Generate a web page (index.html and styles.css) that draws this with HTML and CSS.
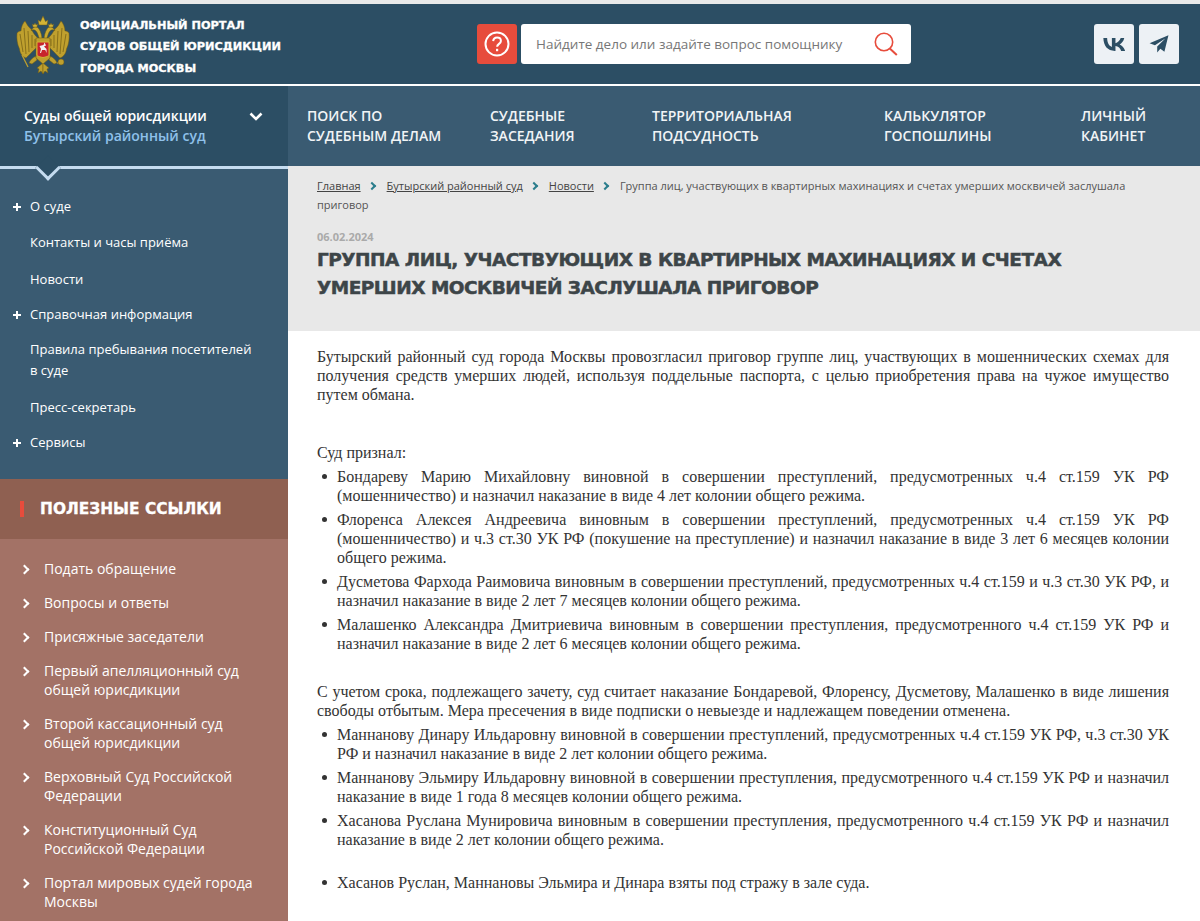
FILE: index.html
```html
<!DOCTYPE html>
<html lang="ru">
<head>
<meta charset="utf-8">
<title>Группа лиц</title>
<link rel="stylesheet" href="styles.css">
</head>
<body>
<header class="top">
  <a class="brand">
    <svg class="emblem" viewBox="0 0 54 58" width="54" height="58">
      <defs>
        <g id="half">
          <path fill="#bfa02e" stroke="#6e5a12" stroke-width=".5" d="M22 30C15 37 12 40 10 42 7 41 4 38 3.500 33 1 28 .5 22 1 17c2-2 3-2 4-2 0-4 2-8 4-10 2 3 3 6 6 8 2 3 4 7 7 9z"/>
          <path fill="none" stroke="#6e5a12" stroke-width=".7" d="M4 18l3 18M8 12l2 26M12 15l1 21M16 19v13M19 23v7"/>
          <path fill="#c9a92f" stroke="#6e5a12" stroke-width=".5" d="M24 24c-2-4-2-7-4-9-2-2-4-1-5 0l2-3c2-2 5-1 6 1 2 3 3 7 3 11z"/>
          <path fill="#d3b335" stroke="#6e5a12" stroke-width=".4" d="M17 11l-.5-3 1.500 1 1-2 1 2 1.500-1-.5 3z"/>
          <path fill="#bfa02e" stroke="#6e5a12" stroke-width=".5" d="M20 40c-4 2-6 4-7 7l3 1 5-4zM27 47l-6 5 2 1-1 4 3-2 2 3z"/>
        </g>
      </defs>
      <use href="#half"/>
      <use href="#half" transform="matrix(-1 0 0 1 54 0)"/>
      <path fill="none" stroke="#bfa02e" stroke-width="1.200" d="M6 39l6 12"/>
      <path fill="none" stroke="#bfa02e" stroke-width="1" d="M41 47l3 0"/>
      <circle cx="45" cy="46" r="3" fill="#bfa02e" stroke="#6e5a12" stroke-width=".5"/>
      <path fill="#d3b335" stroke="#6e5a12" stroke-width=".5" d="M23 9l-1-5 2.500 1.500L27 0l2.500 5.500L32 4l-1 5z"/>
      <path fill="#bfa02e" stroke="#6e5a12" stroke-width=".5" d="M20 22h14v20l-7 6-7-6z"/>
      <path fill="#c8232c" stroke="#d3b335" stroke-width="1" d="M21 26h12v13c0 1-3 2-6 2.500-3-.5-6-1.500-6-2.500z"/>
      <path fill="#f2f2f2" d="M24 37l1-4-1.500-3 4-1 1-2.500 1.500 3-2 1 2.500 2.500V37l-1.200-3h-3.300L25 37z"/>
    </svg>
    <span class="brand-text">Официальный портал<br>судов общей юрисдикции<br>города Москвы</span>
  </a>
  <div class="search">
    <span class="help">
      <svg viewBox="0 0 28 28" width="28" height="28"><circle cx="14" cy="14" r="11.500" fill="none" stroke="#fff" stroke-width="2"/><path d="M10.200 11.200c.2-2.300 1.900-3.600 3.900-3.600 2.200 0 3.800 1.400 3.800 3.300 0 2.900-3.800 3-3.800 5.900" fill="none" stroke="#fff" stroke-width="2"/><rect x="13" y="18.800" width="2.200" height="2.400" fill="#fff"/></svg>
    </span>
    <div class="search-box">
      <span class="placeholder">Найдите дело или задайте вопрос помощнику</span>
      <svg class="loupe" viewBox="0 0 24 24" width="24" height="24"><circle cx="10" cy="10" r="8.700" fill="none" stroke="#e74c3c" stroke-width="1.600"/><path d="M15.800 16.500l7 6.500" stroke="#e74c3c" stroke-width="2" fill="none"/></svg>
    </div>
  </div>
  <div class="socials">
    <a class="social"><svg viewBox="0 0 24 14" width="22" height="13"><path fill="#2c4e64" d="M13 14C5 14 .6 8.700.4 0h4.100c.1 6.400 3 9.100 5.200 9.700V0h3.900v5.500c2.400-.3 4.900-2.800 5.700-5.500h3.900c-.6 3.400-3.200 5.900-5 6.900 1.800.8 4.800 3.100 5.900 7.100h-4.300c-.9-2.900-3.200-5.100-6.200-5.400V14z"/></svg></a>
    <a class="social"><svg viewBox="0 0 22 20" width="20" height="18"><path fill="#2c4e64" d="M21.500.3L.5 9.300l6 2.200L18 3.800 9 12.800v6.700l3.500-4.200 4.500 3.400z"/></svg></a>
  </div>
</header>
<nav class="bar">
  <div class="court">
    <div class="court-text">
      <div class="court-name">Суды общей юрисдикции</div>
      <div class="court-sub">Бутырский районный суд</div>
    </div>
    <svg class="court-arrow" viewBox="0 0 14 9" width="14" height="9"><path d="M1.500 1.500L7 7l5.500-5.500" fill="none" stroke="#fff" stroke-width="2.600"/></svg>
    <span class="notch"></span>
  </div>
  <div class="main-nav">
    <a>Поиск по<br>судебным делам</a>
    <a>Судебные<br>заседания</a>
    <a>Территориальная<br>подсудность</a>
    <a>Калькулятор<br>госпошлины</a>
    <a>Личный<br>кабинет</a>
  </div>
</nav>
<div class="layout">
  <aside class="side">
    <ul class="side-menu">
      <li class="plus">О суде</li>
      <li>Контакты и часы приёма</li>
      <li>Новости</li>
      <li class="plus">Справочная информация</li>
      <li>Правила пребывания посетителей в суде</li>
      <li>Пресс-секретарь</li>
      <li class="plus">Сервисы</li>
    </ul>
    <h2 class="links-title"><span>Полезные ссылки</span></h2>
    <ul class="links">
      <li>Подать обращение</li>
      <li>Вопросы и ответы</li>
      <li>Присяжные заседатели</li>
      <li>Первый апелляционный суд общей юрисдикции</li>
      <li>Второй кассационный суд общей юрисдикции</li>
      <li>Верховный Суд Российской Федерации</li>
      <li>Конституционный Суд Российской Федерации</li>
      <li>Портал мировых судей города Москвы</li>
    </ul>
  </aside>
  <main class="content">
    <section class="head">
      <div class="crumbs"><a>Главная</a><i></i><a>Бутырский районный суд</a><i></i><a>Новости</a><i></i><span>Группа лиц, участвующих в квартирных махинациях и счетах умерших москвичей заслушала</span> <span>приговор</span></div>
      <div class="date">06.02.2024</div>
      <h1>Группа лиц, участвующих в квартирных махинациях и счетах умерших москвичей заслушала приговор</h1>
    </section>
    <article class="text">
      <p class="lead">Бутырский районный суд города Москвы провозгласил приговор группе лиц, участвующих в мошеннических схемах для получения средств умерших людей, используя поддельные паспорта, с целью приобретения права на чужое имущество путем обмана.</p>
      <p>Суд признал:</p>
      <ul>
        <li>Бондареву Марию Михайловну виновной в совершении преступлений, предусмотренных ч.4 ст.159 УК РФ (мошенничество) и назначил наказание в виде 4 лет колонии общего режима.</li>
        <li>Флоренса Алексея Андреевича виновным в совершении преступлений, предусмотренных ч.4 ст.159 УК РФ (мошенничество) и ч.3 ст.30 УК РФ (покушение на преступление) и назначил наказание в виде 3 лет 6 месяцев колонии общего режима.</li>
        <li>Дусметова Фархода Раимовича виновным в совершении преступлений, предусмотренных ч.4 ст.159 и ч.3 ст.30 УК РФ, и назначил наказание в виде 2 лет 7 месяцев колонии общего режима.</li>
        <li>Малашенко Александра Дмитриевича виновным в совершении преступления, предусмотренного ч.4 ст.159 УК РФ и назначил наказание в виде 2 лет 6 месяцев колонии общего режима.</li>
      </ul>
      <p class="second">С учетом срока, подлежащего зачету, суд считает наказание Бондаревой, Флоренсу, Дусметову, Малашенко в виде лишения свободы отбытым. Мера пресечения в виде подписки о невыезде и надлежащем поведении отменена.</p>
      <ul>
        <li>Маннанову Динару Ильдаровну виновной в совершении преступлений, предусмотренных ч.4 ст.159 УК РФ, ч.3 ст.30 УК РФ и назначил наказание в виде 2 лет колонии общего режима.</li>
        <li>Маннанову Эльмиру Ильдаровну виновной в совершении преступления, предусмотренного ч.4 ст.159 УК РФ и назначил наказание в виде 1 года 8 месяцев колонии общего режима.</li>
        <li>Хасанова Руслана Мунировича виновным в совершении преступления, предусмотренного ч.4 ст.159 УК РФ и назначил наказание в виде 2 лет колонии общего режима.</li>
      </ul>
      <ul class="last">
        <li>Хасанов Руслан, Маннановы Эльмира и Динара взяты под стражу в зале суда.</li>
      </ul>
    </article>
  </main>
</div>
</body>
</html>
```
FILE: styles.css
```css
* { box-sizing: border-box; }
html, body { margin: 0; padding: 0; height: 921px; overflow: hidden; }
body { background: #fff; font-family: "Open Sans", sans-serif; border-top: 4px solid #e9e9e9; }
ul { list-style: none; margin: 0; padding: 0; }

.top { height: 80px; background: #2c4e64; display: flex; align-items: center; position: relative; }
.brand { width: 477px; padding-left: 16px; display: flex; align-items: center; flex: none; }
.emblem { flex: none; margin-top: 2px; }
.brand-text { margin: 6px 0 0 10px; color: #fff; font: 700 11.300px/21.500px "DejaVu Sans", sans-serif; text-transform: uppercase; -webkit-text-stroke: .3px #fff; }
.search { display: flex; gap: 4px; }
.help { width: 40px; height: 40px; background: #e74c3c; border-radius: 3px; display: flex; align-items: center; justify-content: center; }
.search-box { width: 390px; height: 40px; background: #fff; border-radius: 3px; display: flex; align-items: center; justify-content: space-between; padding: 0 13px 0 15px; }
.placeholder { font-size: 13.500px; color: #777; }
.socials { margin-left: 183px; display: flex; gap: 5px; }
.social { width: 40px; height: 40px; background: #edf1f5; border-radius: 3px; display: flex; align-items: center; justify-content: center; }

.bar { margin-top: 2px; height: 80px; display: flex; }
.court { width: 288px; flex: none; background: #2c4e64; padding: 20px 25px 0 24px; display: flex; justify-content: space-between; align-items: flex-start; position: relative; color: #fff; }
.court-name { font-size: 14px; font-weight: 600; line-height: 20px; }
.court-sub { font-size: 14px; font-weight: 600; line-height: 20px; color: #8fc1ea; }
.court-arrow { margin-top: 6px; }
.notch { position: absolute; left: 39px; top: 73px; width: 18px; height: 18px; background: #2c4e64; border-right: 3px solid #c5dcf0; border-bottom: 3px solid #c5dcf0; transform: rotate(45deg); z-index: 2; }
.main-nav { flex: 1; background: #3a5b72; padding: 20px 0 0 19px; display: grid; grid-template-columns: 183px 162px 232px 197px auto; color: #f1f4f6; font-size: 14px; font-weight: 600; line-height: 20px; text-transform: uppercase; align-content: start; }

.layout { display: flex; height: 755px; }
.side { width: 288px; flex: none; display: flex; flex-direction: column; }
.side-menu { flex: none; background: #3a5b72; color: #fff; font-size: 13px; line-height: 21px; height: 313px; padding: 27px 35px 0 30px; border-top: 3px solid #c5dcf0; }
.side-menu li { position: relative; margin-bottom: 16px; }
.side-menu li.plus { margin-top: -2px; margin-bottom: 14px; }
.side-menu li.plus:first-child { margin-top: 0; margin-bottom: 15px; }
.plus::before { content: ""; position: absolute; left: -17px; top: 7px; width: 8px; height: 8px; background: linear-gradient(#fff, #fff) center/8px 2px no-repeat, linear-gradient(#fff, #fff) center/2px 8px no-repeat; }
.links-title { flex: none; margin: 0; height: 60px; background: #8f6051; display: flex; align-items: center; padding-left: 20px; color: #fff; font: 700 15.400px "DejaVu Sans", sans-serif; text-transform: uppercase; }
.links-title span { border-left: 4px solid #e74c3c; padding-left: 16px; line-height: 16px; -webkit-text-stroke: .3px #fff; }
.links { flex: 1; background: #a37266; color: #fff; font-size: 14px; line-height: 19px; padding: 20px 20px 0 44px; }
.links li { position: relative; margin-bottom: 15px; }
.links li:last-child { margin-bottom: 0; }
.links li::before { content: ""; position: absolute; left: -23px; top: 7px; width: 5px; height: 5px; border-top: 2px solid #fff; border-right: 2px solid #fff; transform: rotate(45deg); }

.content { flex: 1; min-width: 0; }
.head { height: 165px; background: #e8e8e8; padding: 10px 31px 0 29px; }
.crumbs { font-size: 11px; line-height: 19px; color: #555; }
.crumbs a { text-decoration: underline; color: #444; }
.crumbs i { display: inline-block; width: 6px; height: 6px; margin: 0 12px 1px 8px; border-top: 2px solid #2a7d8c; border-right: 2px solid #2a7d8c; transform: rotate(45deg); }
.date { margin-top: 16px; font-size: 11px; font-weight: 700; line-height: 14px; color: #aaa; }
h1 { margin: 2px 0 0; font: 700 18.500px/28px "DejaVu Sans", sans-serif; letter-spacing: -.5px; text-transform: uppercase; color: #3d4548; -webkit-text-stroke: .5px #3d4548; }

.text { padding: 16px 31px 0 29px; font: 16px/19px "Liberation Serif", serif; color: #333; text-align: justify; }
.text p { margin: 0; }
.lead { margin-bottom: 39px !important; }
.text ul { list-style: none; padding-left: 20px; }
.text li { margin-top: 5px; position: relative; }
.text li::before { content: ""; position: absolute; left: -15px; top: 7px; width: 5px; height: 5px; border-radius: 50%; background: #333; }
.second { margin-top: 29px !important; }
.last { margin-top: 24px; }
```
